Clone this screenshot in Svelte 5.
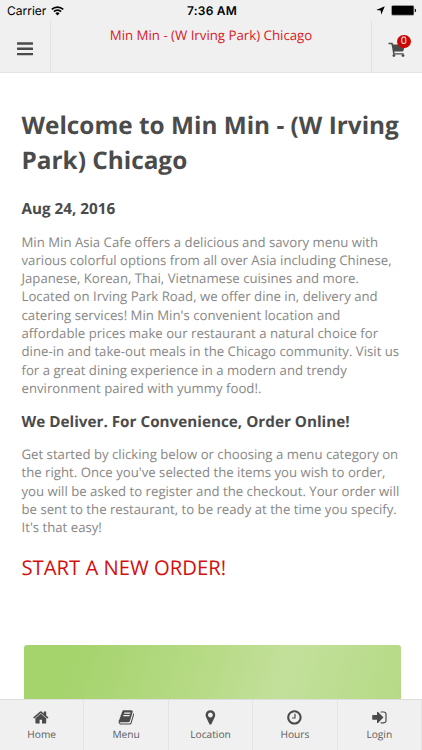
<script lang="ts">
  type Tab = { label: string; icon: string };

  // Icons share one 1792-unit grid.
  const tabs: Tab[] = [
    {
      label: "Home",
      icon: "M1408 992v480q0 26-19 45t-45 19h-384v-384h-256v384h-384q-26 0-45-19t-19-45v-480q0-1 .5-3t.5-3l575-474 575 474q1 2 1 6zm223-69l-62 74q-8 9-21 11h-3q-13 0-21-7l-692-577-692 577q-12 8-24 7-13-2-21-11l-62-74q-8-10-7-23.5t11-21.5l719-599q32-26 76-26t76 26l244 204v-195q0-14 9-23t23-9h192q14 0 23 9t9 23v408l219 182q10 8 11 21.5t-7 23.5z",
    },
    {
      label: "Menu",
      icon: "M1703 478q40 57 18 129l-275 906q-19 64-76.5 107.5t-122.5 43.5h-923q-77 0-148.5-53.5t-99.5-131.5q-24-67-2-127 0-4 3-27t4-37q1-8-3-21.5t-3-19.5q2-11 8-21t16.5-23.5 16.5-23.5q23-38 45-91.5t30-91.5q3-10 .5-30t-.5-28q3-11 17-28t17-23q21-36 42-92t25-90q1-9-2.5-32t.5-28q4-13 22-30.5t22-22.5q19-26 42.5-84.5t27.5-96.5q1-8-3-25.5t-2-26.5q2-8 9-18t18-23 17-21q8-12 16.5-30.5t15-35 16-36 19.5-32 26.5-23.5 36-11.5 47.5 5.5l-1 3q38-9 51-9h761q74 0 114 56t18 130l-274 906q-36 119-71.5 153.5t-128.5 34.5h-869q-27 0-38 15-11 16-1 43 24 70 144 70h923q29 0 56-15.5t35-41.5l300-987q7-22 5-57 38 15 59 43zm-1064 2q-4 13 2 22.5t20 9.5h608q13 0 25.5-9.5t16.5-22.5l21-64q4-13-2-22.5t-20-9.5h-608q-13 0-25.5 9.5t-16.5 22.5zm-83 256q-4 13 2 22.5t20 9.5h608q13 0 25.5-9.5t16.5-22.5l21-64q4-13-2-22.5t-20-9.5h-608q-13 0-25.5 9.5t-16.5 22.5z",
    },
    {
      label: "Location",
      icon: "M1152 640q0-106-75-181t-181-75-181 75-75 181 75 181 181 75 181-75 75-181zm256 0q0 109-33 179l-364 774q-16 33-47.5 52t-67.5 19-67.5-19-46.5-52l-365-774q-33-70-33-179 0-212 150-362t362-150 362 150 150 362z",
    },
    {
      label: "Hours",
      icon: "M1024 544v448q0 14-9 23t-23 9h-320q-14 0-23-9t-9-23v-64q0-14 9-23t23-9h224v-352q0-14 9-23t23-9h64q14 0 23 9t9 23zm416 352q0-148-73-273t-198-198-273-73-273 73-198 198-73 273 73 273 198 198 273 73 273-73 198-198 73-273zm224 0q0 209-103 385.5t-279.5 279.5-385.5 103-385.5-103-279.5-279.5-103-385.5 103-385.5 279.5-279.5 385.5-103 385.5 103 279.5 279.5 103 385.5z",
    },
    {
      label: "Login",
      icon: "M1312 896q0 26-19 45l-544 544q-19 19-45 19t-45-19-19-45v-288h-448q-26 0-45-19t-19-45v-384q0-26 19-45t45-19h448v-288q0-26 19-45t45-19 45 19l544 544q19 19 19 45zm352-352v704q0 119-84.5 203.5t-203.5 84.5h-320q-13 0-22.5-9.5t-9.5-22.5q0-4-1-20t-.5-26.5 3-23.5 10-19.5 20.5-6.5h320q66 0 113-47t47-113v-704q0-66-47-113t-113-47h-312l-11.5-1-11.5-3-8-5.5-7-9-2-13.5q0-4-1-20t-.5-26.5 3-23.5 10-19.5 20.5-6.5h320q119 0 203.5 84.5t84.5 203.5z",
    },
  ];

  const name = "Min Min - (W Irving Park) Chicago";
  let cartCount = $state(0);
</script>

<div class="screen">
  <header>
    <div class="status">
      <div class="carrier">
        <span>Carrier</span>
        <svg width="13" height="10" viewBox="0 0 13 10" aria-hidden="true">
          <path d="M.8 3.4a8.1 8.1 0 0 1 11.4 0M2.9 5.6a5.1 5.1 0 0 1 7.2 0" fill="none" stroke="#000" stroke-width="1.7" />
          <path d="M6.5 9.5 4.4 7.3a3 3 0 0 1 4.2 0z" />
        </svg>
      </div>
      <span class="time">7:36 AM</span>
      <div class="power">
        <svg width="9" height="9" viewBox="0 0 9 9" aria-hidden="true">
          <path d="M8.8.3 5.2 8.8 4.7 4.5.2 4z" />
        </svg>
        <svg width="26" height="11" viewBox="0 0 26 11" aria-hidden="true">
          <rect x=".3" y=".3" width="22.8" height="10.2" rx="1.5" fill="#777" />
          <rect x="1" y="1" width="21.4" height="8.8" rx=".8" />
          <path d="M23.8 3.6q1.3.4 1.3 1.8t-1.3 1.8z" />
        </svg>
      </div>
    </div>
    <div class="bar">
      <button class="side left" aria-label="Open menu">
        <svg width="16" height="14" viewBox="0 0 16 14">
          <path d="M.8 1.5h14.4M.8 6.8h14.4M.8 12.1h14.4" stroke="#4b4b4b" stroke-width="2.4" stroke-linecap="round" />
        </svg>
      </button>
      <div class="title">{name}</div>
      <button class="side right" aria-label="Cart">
        <span class="cart">
          <svg width="18" height="16" viewBox="0 0 18 16">
            <path d="M.5.8h3.9l.9 1.6h12l-1.8 6.2-.8.9H6.3l.2 1.7h9.2v1.3H5.2L4.3 6.4 3.4 2.2H.5z" fill="#4b4b4b" />
            <circle cx="5.9" cy="13.6" r="1.4" fill="#4b4b4b" />
            <circle cx="15" cy="13.6" r="1.4" fill="#4b4b4b" />
          </svg>
          <span class="badge">{cartCount}</span>
        </span>
      </button>
    </div>
  </header>

  <main>
    <h1>Welcome to {name}</h1>
    <h2>Aug 24, 2016</h2>
    <p>
      Min Min Asia Cafe offers a delicious and savory menu with<br />
      various colorful options from all over Asia including Chinese,<br />
      Japanese, Korean, Thai, Vietnamese cuisines and more.<br />
      Located on Irving Park Road, we offer dine in, delivery and<br />
      catering services! Min Min's convenient location and<br />
      affordable prices make our restaurant a natural choice for<br />
      dine-in and take-out meals in the Chicago community. Visit us<br />
      for a great dining experience in a modern and trendy<br />
      environment paired with yummy food!.
    </p>
    <h2>We Deliver. For Convenience, Order Online!</h2>
    <p>
      Get started by clicking below or choosing a menu category on<br />
      the right. Once you've selected the items you wish to order,<br />
      you will be asked to register and the checkout. Your order will<br />
      be sent to the restaurant, to be ready at the time you specify.<br />
      It's that easy!
    </p>
    <a class="order" href="#order">START A NEW ORDER!</a>
    <div class="banner"></div>
  </main>

  <nav>
    {#each tabs as tab (tab.label)}
      <button class="tab">
        <svg width="16.8" height="16.8" viewBox="0 0 1792 1792" aria-hidden="true">
          <path d={tab.icon} />
        </svg>
        <span>{tab.label}</span>
      </button>
    {/each}
  </nav>
</div>

<style>
  .screen {
    display: flex;
    flex-direction: column;
    width: 422px;
    height: 750px;
    overflow: hidden;
    background: #fff;
    color: #4b4b4b;
    font-family: "Open Sans", sans-serif;
    text-rendering: geometricPrecision;
  }
  button {
    margin: 0;
    padding: 0;
    border: 0;
    background: none;
    color: inherit;
    font: inherit;
    text-rendering: inherit;
  }
  svg {
    display: block;
    flex: none;
  }
  header {
    flex: none;
    display: flex;
    flex-direction: column;
    box-sizing: border-box;
    height: 73px;
    background: #f0f0f0;
    border-bottom: 1px solid #e3e3e3;
  }
  .status {
    display: grid;
    grid-template-columns: 1fr auto 1fr;
    align-items: center;
    height: 21px;
    padding: 0 5px 0 7px;
    color: #000;
    font: 12px/21px Inter, sans-serif;
  }
  .carrier, .power {
    display: flex;
    align-items: center;
    gap: 5px;
  }
  .power {
    justify-content: flex-end;
    gap: 6px;
  }
  .time {
    font-weight: 600;
    letter-spacing: 0.2px;
  }
  .bar {
    flex: 1;
    display: flex;
  }
  .side {
    display: flex;
    align-items: center;
    justify-content: center;
    box-sizing: border-box;
    width: 51px;
    padding-top: 4px;
  }
  .left {
    border-right: 1px solid #e2e2e2;
  }
  .right {
    border-left: 1px solid #e2e2e2;
  }
  .title {
    flex: 1;
    padding-top: 4px;
    color: #d8201f;
    font-size: 13.25px;
    line-height: 20px;
    text-align: center;
    white-space: nowrap;
  }
  .cart {
    position: relative;
    top: 1px;
  }
  .badge {
    position: absolute;
    top: -7px;
    left: 9px;
    width: 13.5px;
    height: 13.5px;
    border-radius: 50%;
    background: #cc0505;
    color: #fff;
    font-size: 10.5px;
    line-height: 13.5px;
    text-align: center;
  }
  main {
    flex: 1;
    min-height: 0;
    overflow: hidden;
    padding: 35px 18px 0 21.5px;
  }
  h1 {
    margin: 0;
    font-size: 24.35px;
    font-weight: 700;
    line-height: 35px;
  }
  h2 {
    margin: 20px 0 12.5px;
    font-size: 15.25px;
    font-weight: 700;
    line-height: 22px;
  }
  p {
    margin: 0;
    color: #888;
    font-size: 13.19px;
    line-height: 18.3px;
    white-space: nowrap;
  }
  p + h2 {
    margin-top: 13.5px;
  }
  .order {
    display: block;
    margin-top: 16px;
    color: #d3100f;
    font-size: 20.25px;
    line-height: 28px;
    text-decoration: none;
  }
  .banner {
    height: 120px;
    margin: 64.5px 3px 0 2px;
    border-radius: 3px;
    background: linear-gradient(108deg, #a5d36c 12%, #b8db88 48%, #c3e09b 65%, #b3d982 100%);
  }
  nav {
    flex: none;
    display: grid;
    grid-template-columns: repeat(5, 1fr);
    height: 50px;
    border-top: 1px solid #dedede;
    background: #f0f0f0;
  }
  .tab {
    display: flex;
    flex-direction: column;
    align-items: center;
    padding-top: 9px;
    border-right: 1px solid #e4e4e4;
    font-size: 10.2px;
    line-height: 16px;
  }
  .tab svg {
    fill: #4b4b4b;
  }
  .tab span {
    color: #5c5c5c;
  }
</style>
